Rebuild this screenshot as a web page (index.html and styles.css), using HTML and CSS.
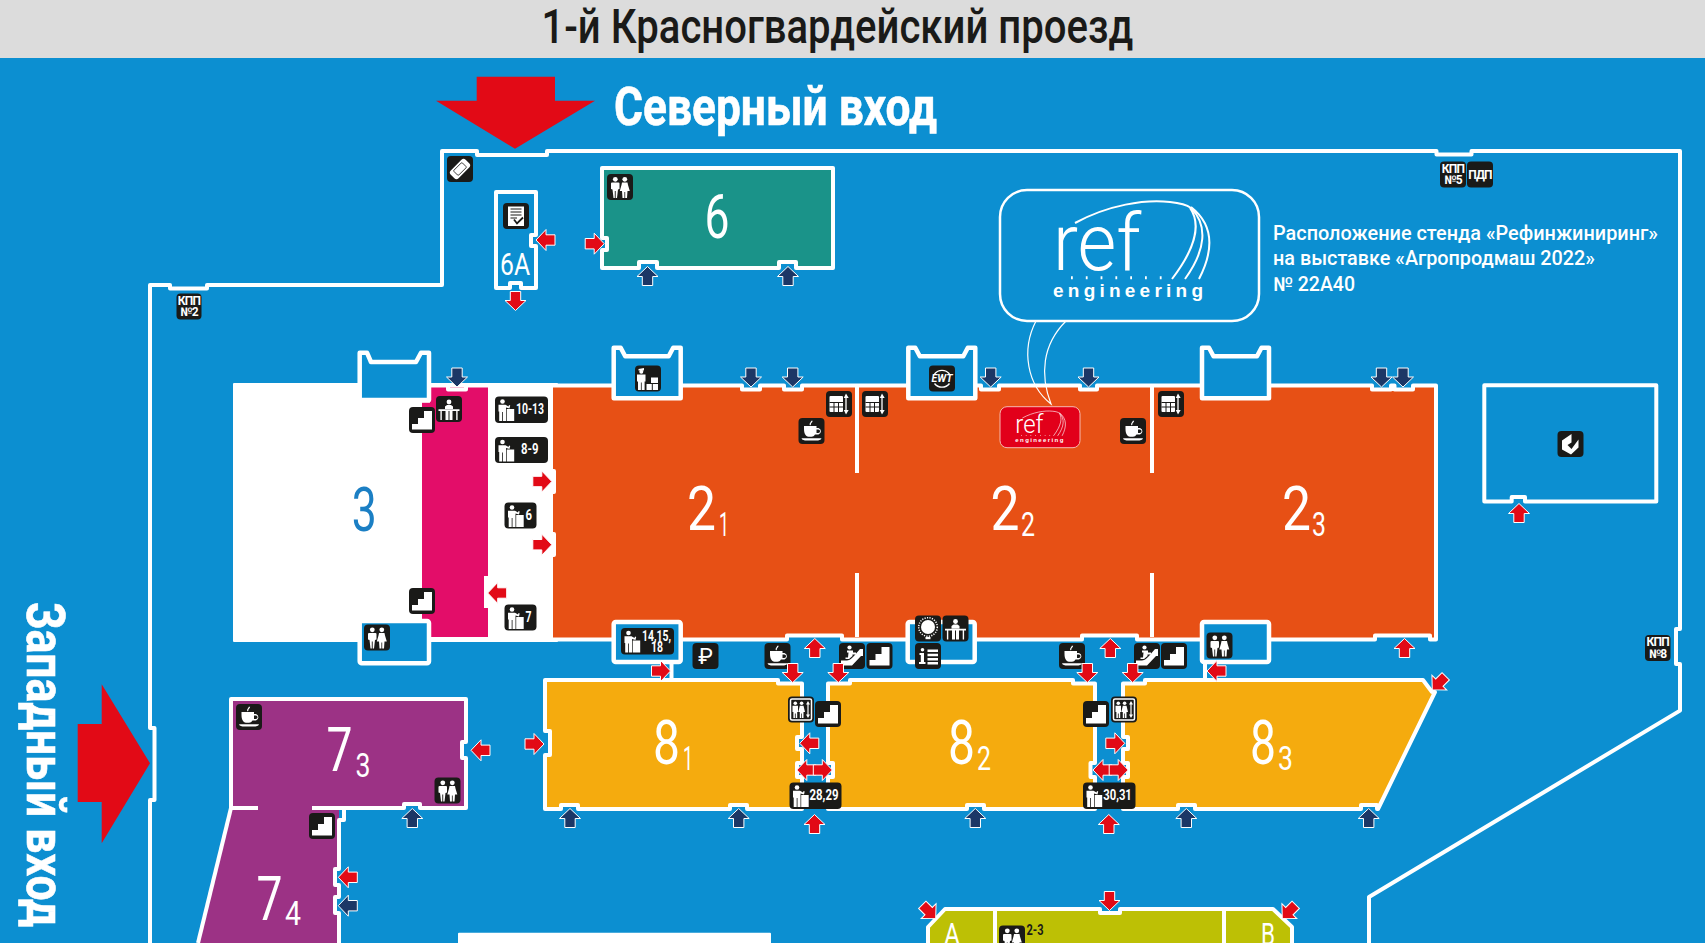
FILE: index.html
```html
<!DOCTYPE html>
<html lang="ru">
<head>
    <meta charset="UTF-8">
    <title>Схема павильонов</title>
    <link rel="stylesheet" href="styles.css">
</head>
<body>
    <header class="street"><span class="street-name">1-й Красногвардейский проезд</span></header>

    <svg class="map" viewBox="0 58 1705 885" width="1705" height="885" xmlns="http://www.w3.org/2000/svg">
        <defs>
            <polygon id="a-red" class="arrow-red" points="0,-9.5 10.5,0.5 5.2,0.5 5.2,9.5 -5.2,9.5 -5.2,0.5 -10.5,0.5"/>
            <polygon id="a-navy" class="arrow-navy" points="0,-9.5 10.5,0.5 5.2,0.5 5.2,9.5 -5.2,9.5 -5.2,0.5 -10.5,0.5"/>
            <path id="ears" class="cut" d="M0 38V0H7L11.5 8.5H55L59.5 0H67V50.5H0Z"/>

            <!-- иконки 26x26 -->
            <g id="i-stair"><rect class="bd" width="26" height="26" rx="4"/><path class="wh" d="M3 22.5V17H9V11H15V4H23V22.5Z"/></g>
            <g id="i-wc"><rect class="bd" width="26" height="26" rx="4"/><circle class="wh" cx="8.3" cy="5.3" r="2.4"/><path class="wh" d="M4 9.5Q4 8.5 5 8.5H11.5Q12.5 8.5 12.5 9.5V15L11 15.5 10 24H8.7V17H7.8V24H6.5L5.5 15.5 4 15Z"/><circle class="wh" cx="17.8" cy="5.3" r="2.4"/><path class="wh" d="M15 8.5H20.5L21 11 22.8 17H20.5L20 24H18.2V18H17.4V24H15.5L15 17H12.8L14.5 11Z"/></g>
            <g id="i-coffee"><rect class="bd" width="26" height="26" rx="4"/><path class="wh" d="M5.5 8H18V10H20A3.4 3.4 0 0 1 20 16.5H16.5C15.5 18 14.5 18.7 13 18.7H10C7 18.7 5.5 15 5.5 11ZM18 11.5V15H19.8A1.7 1.7 0 0 0 19.8 11.5Z"/><path class="ln" d="M12 7C10.5 5.5 13.5 4.5 13.5 2.8"/><path class="wh" d="M3 20.2H23C22.5 22 20 22.6 18 22.6H8C6 22.6 3.5 22 3 20.2Z"/></g>
            <g id="i-grid"><rect class="bd" width="26" height="26" rx="4"/><rect class="wh" x="3.5" y="5" width="13.5" height="16" rx="1"/><path class="ln-bd" d="M3.5 11.5H17M3.5 16H17M8 11.5V21M12.5 11.5V21"/><path class="ln" d="M20 6V20"/><path class="wh" d="M20 2.5L22.7 7H17.8ZM20 23.5L17.8 19H22.7Z"/></g>
            <g id="i-lift"><rect class="bd" width="26" height="26" rx="4"/><rect class="frame" x="2.5" y="2.5" width="21" height="21" rx="1.5"/><circle class="wh" cx="7.3" cy="6.8" r="1.8"/><path class="wh" d="M4.5 9.3H10V15.5H9.2V21.5H7.7V17H6.9V21.5H5.4V15.5H4.5Z"/><circle class="wh" cx="13.6" cy="6.8" r="1.8"/><path class="wh" d="M11.8 9.3H15.5L17 15.5H15.5V21.5H14V17H13.3V21.5H11.8V15.5H10.3Z"/><path class="wh" d="M20 4.5L22 8H20.6V18H22L20 21.5 18 18H19.4V8H18Z"/></g>
            <g id="i-desk"><rect class="bd" width="26" height="26" rx="4"/><circle class="wh" cx="13" cy="6" r="2.4"/><path class="wh" d="M9 13V10.5L11 9H15L17 10.5V13ZM2.5 13.2H23.5V15H2.5ZM4.4 15H5.8V24H4.4ZM20.2 15H21.6V24H20.2ZM9.5 15H12.5V24H9.5ZM13.5 15H16.5V24H13.5Z"/></g>
            <g id="i-guard"><rect class="bd" width="26" height="26" rx="4"/><path class="wh" d="M3.5 3.5L9 2.5V5H3.5Z"/><circle class="wh" cx="6.3" cy="6.3" r="2"/><path class="wh" d="M2 9H10.5V16H9.6V24.5H6.7V17H5.9V24.5H3V16H2Z"/><path class="wh" d="M16 12H23V17.5H16ZM11.5 18.5H16.8V24.5H11.5ZM17.8 18.5H23V24.5H17.8Z"/></g>
            <g id="i-ewt"><rect class="bd" width="26" height="26" rx="4"/><path class="ln" d="M5.5 8.5A9.5 9.5 0 0 1 20.5 8.5M20.5 18A9.5 9.5 0 0 1 5.5 18"/><text class="t-ewt" x="2.5" y="16.7" textLength="21" lengthAdjust="spacingAndGlyphs">EWT</text></g>
            <g id="i-rub"><rect class="bd" width="26" height="26" rx="4"/><text class="t-rub" x="13" y="21">₽</text></g>
            <g id="i-esc"><rect class="bd" width="26" height="26" rx="4"/><circle class="wh" cx="10.5" cy="4.5" r="2.1"/><path class="wh" d="M8 7.5H14V9.5H17V11.5H13.5V13L10 16H6.5V14.5H9L9.5 9.5H8Z"/><path class="wh" d="M2 17.5H8C11 17.5 13 15 15 13L21 6H24V13H22L13 22.5H2Z"/></g>
            <g id="i-sun"><rect class="bd" width="26" height="26" rx="4"/><circle class="wh" cx="13" cy="11.5" r="7"/><circle class="dash" cx="13" cy="11.5" r="9.3"/><rect class="wh" x="10.5" y="21.5" width="5" height="2.2"/></g>
            <g id="i-info"><rect class="bd" width="26" height="26" rx="4"/><circle class="wh" cx="7.5" cy="6.7" r="1.8"/><path class="wh" d="M4.5 10H9V19H10.5V21H4V19H5.8V12H4.5ZM12.5 6.5H23V9H12.5ZM12.5 10.7H23V13.2H12.5ZM12.5 15H23V17.5H12.5ZM12.5 19H23V21.5H12.5Z"/></g>
            <g id="i-band"><rect class="bd" width="26" height="26" rx="4"/><g transform="rotate(-45 13 13)"><rect class="wh" x="2.5" y="7.5" width="21" height="11" rx="3"/><rect class="frame-bd" x="7" y="9.6" width="12" height="6.8" rx="1"/></g></g>
            <g id="i-doc"><rect class="bd" width="26" height="26" rx="4"/><path class="wh" d="M5 3.5H21V23H5Z"/><path class="ln-bd" d="M7.5 6H18.5M7.5 9H18.5M7.5 12H18.5M7.5 15H14"/><path class="ln-check" d="M11 16.5L14 20.5 20 14.5"/></g>
            <g id="i-leaf"><rect class="bd" width="26" height="26" rx="4"/><path class="wh" d="M14 3V11.5L10 14 14 18 21 8.5V16.5L13.5 23.5 4.5 18.5V9.5Z"/></g>
            <g id="i-clerk"><circle class="wh" cx="7.5" cy="5" r="2.3"/><path class="wh" d="M3.5 8.2H10.5L13.5 10 14 8.5 15.2 9 14.5 12 11 11V24.5H8V15.5H7.2V24.5H4.2V15H3.5Z"/><rect class="wh" x="11.7" y="12.5" width="7.5" height="12"/></g>

            <!-- логотип -->
            <g id="ref-logo">
                <text class="logo-ref" x="1053" y="270" textLength="88" lengthAdjust="spacingAndGlyphs">ref</text>
                <path class="logo-line" d="M1075 223C1108 205 1145 199 1170 202C1180 203 1187 205 1191 208"/>
                <path class="logo-line" d="M1190 208C1200 222 1198 245 1172 279"/>
                <path class="logo-line" d="M1191 208C1208 225 1206 250 1185 279"/>
                <path class="logo-line" d="M1191 207C1214 225 1214 250 1199 279"/>
                <path class="logo-dots" d="M1071 277.7H1162"/>
                <text class="logo-eng" x="1053" y="297" textLength="150">engineering</text>
            </g>
        </defs>

        <rect class="water" x="0" y="58" width="1705" height="885"/>

        <!-- внешний забор -->
        <path class="wall" d="M150 943V800H154.5V728H150V285H170V288.5H207V285H442V151H477V155H547V151H1436.5V154.6H1471.5V151H1680V629H1676V664H1680V710.6L1369 897V943"/>

        <!-- павильон 6 и 6А -->
        <path class="hall h6" d="M602 168H833V268H796V262H779V268H657V262H639V268H602V250H607V238H602Z"/>
        <path class="wall" d="M496 192H536V235H531V246H536V288H521V283H510V288H496Z"/>

        <!-- павильоны 3 и 2 -->
        <rect class="white-hall" x="233" y="383" width="325" height="259" rx="1"/>
        <path class="pink" d="M430 387.5H488V576H484V608H488V637H430V621H422V402.7H430Z"/>
        <path class="door" d="M448 385.5V389.5H466V385.5"/>
        <path class="hall h2" d="M551 385.5H742V389.5H760V385.5H784V389.5H802V385.5H981V389.5H999V385.5H1080V389.5H1097V385.5H1372V389.5H1391V385.5H1394.5V389.5H1413V385.5H1436V639.5H1430V635.5H1375V639.5H1137V635.5H1082V639.5H842V635.5H787V639.5H551V555H554V534H551V492H554V471H551Z"/>
        <path class="wall" d="M857 386V473M857 573V637M1152 386V473M1152 573V637"/>

        <use href="#ears" x="613.7" y="347.7"/>
        <use href="#ears" x="908.3" y="347.7"/>
        <use href="#ears" x="1202" y="347.7"/>
        <path class="cut" d="M359.7 385V352.7H367L371 362H416L421 352.7H429V400H359.7Z"/>
        <rect class="cut" x="359.7" y="621" width="69.3" height="42.3" rx="2"/>
        <rect class="cut" x="613.7" y="622" width="67" height="40" rx="2"/>
        <rect class="cut" x="907.7" y="622" width="67" height="40" rx="2"/>
        <rect class="cut" x="1202" y="622" width="67" height="40" rx="2"/>
        <path class="wall" d="M671.5 662V680M1205 662V680"/>

        <!-- правый павильон -->
        <path class="wall" d="M1484.3 385.3H1656.3V501.6H1525V497H1511.7V501.6H1484.3Z"/>

        <!-- павильоны 7 -->
        <path class="h7" d="M231 699H466V742H462V758H466V808H420V804H404V808H339V869H335V885H339V897H335V913H339V943H198L231 808Z"/>
        <path class="wall" d="M258 808H231V699H466V742H462V758H466V808H420V804H404V808H312"/>
        <path class="wall" d="M231 808L198 943"/>
        <path class="wall" d="M330 808H344V820H339V869H335V885H339V897H335V913H339V943"/>

        <!-- павильоны 8 -->
        <path class="hall h8" d="M545 680H778V683.5H802V737H797V749H802V763H797V777H802V809H747V805H730V809H578V805H561V809H545V755H550V731H545Z"/>
        <path class="hall h8" d="M828 683.5H850V680H1073V683.5H1095V763H1090.5V777H1095V809H984V805H967V809H828V777H833V763H828Z"/>
        <path class="hall h8" d="M1123 683.5H1145V680H1423L1432 692H1435L1378 809H1377V805H1361V809H1195V805H1178V809H1123V777H1128V763H1123V749H1128V737H1123Z"/>

        <!-- павильон внизу -->
        <path class="hall h-olive" d="M928 950V927L945 909H1100V913H1120V909H1273L1292 927V950Z"/>
        <path class="wall" d="M995 909V943M1224 909V943"/>
        <rect class="white-block" x="458" y="932.7" width="313" height="20" rx="1"/>

        <!-- большие стрелки входов -->
        <polygon class="entry" points="476.7,76.7 555,76.7 555,100.7 595,100.7 515,148.7 436,100.7 476.7,100.7"/>
        <polygon class="entry" points="77.7,724 101.7,724 101.7,684.3 150,763.3 101.7,843.3 101.7,802 77.7,802"/>

        <!-- номера павильонов -->
        <text class="num" x="704.5" y="238" textLength="25" lengthAdjust="spacingAndGlyphs">6</text>
        <text class="num-small" x="500" y="275" textLength="30" lengthAdjust="spacingAndGlyphs">6А</text>
        <text class="num num-3" x="351.7" y="531" textLength="25" lengthAdjust="spacingAndGlyphs">3</text>
        <text class="num" x="687" y="530" textLength="29" lengthAdjust="spacingAndGlyphs">2</text>
        <text class="sub" x="719" y="536" textLength="10" lengthAdjust="spacingAndGlyphs">1</text>
        <text class="num" x="990.5" y="530" textLength="29" lengthAdjust="spacingAndGlyphs">2</text>
        <text class="sub" x="1021" y="536" textLength="14" lengthAdjust="spacingAndGlyphs">2</text>
        <text class="num" x="1282" y="530" textLength="29" lengthAdjust="spacingAndGlyphs">2</text>
        <text class="sub" x="1312" y="536" textLength="14" lengthAdjust="spacingAndGlyphs">3</text>
        <text class="num" x="326.5" y="771" textLength="26" lengthAdjust="spacingAndGlyphs">7</text>
        <text class="sub" x="355.5" y="776.5" textLength="15" lengthAdjust="spacingAndGlyphs">3</text>
        <text class="num" x="256.5" y="920" textLength="26" lengthAdjust="spacingAndGlyphs">7</text>
        <text class="sub" x="285" y="925" textLength="16" lengthAdjust="spacingAndGlyphs">4</text>
        <text class="num" x="653" y="764" textLength="27" lengthAdjust="spacingAndGlyphs">8</text>
        <text class="sub" x="683" y="770" textLength="10" lengthAdjust="spacingAndGlyphs">1</text>
        <text class="num" x="948" y="764" textLength="27" lengthAdjust="spacingAndGlyphs">8</text>
        <text class="sub" x="977" y="770" textLength="14" lengthAdjust="spacingAndGlyphs">2</text>
        <text class="num" x="1250" y="764" textLength="26" lengthAdjust="spacingAndGlyphs">8</text>
        <text class="sub" x="1278" y="770" textLength="15" lengthAdjust="spacingAndGlyphs">3</text>
        <text class="num-small" x="944" y="945" textLength="16" lengthAdjust="spacingAndGlyphs">А</text>
        <text class="num-small" x="1261" y="945" textLength="14" lengthAdjust="spacingAndGlyphs">В</text>

        <!-- подписи -->
        <text class="sign" x="614" y="125" textLength="323" lengthAdjust="spacingAndGlyphs">Северный вход</text>
        <text class="sign" transform="translate(27 602) rotate(90)" textLength="325" lengthAdjust="spacingAndGlyphs">Западный вход</text>
        <text class="note" x="1273" y="240" textLength="385" lengthAdjust="spacingAndGlyphs">Расположение стенда «Рефинжиниринг»</text>
        <text class="note" x="1273" y="265" textLength="322" lengthAdjust="spacingAndGlyphs">на выставке «Агропродмаш 2022»</text>
        <text class="note" x="1273" y="290.5" textLength="82" lengthAdjust="spacingAndGlyphs">№ 22А40</text>

        <!-- стенд -->
        <rect class="bubble" x="1000" y="190" width="259" height="131" rx="27"/>
        <path class="bubble-tail" d="M1036 321C1021 350 1027 385 1051 404C1040 375 1042 345 1066 321"/>
        <use href="#ref-logo"/>
        <rect class="stand" x="1000" y="406.7" width="80" height="41" rx="7"/>
        <use href="#ref-logo" transform="translate(678.4 346.6) scale(.32)"/>

        <!-- значки -->
        <use href="#i-band" x="447" y="156"/>
        <use href="#i-doc" x="503" y="203"/>
        <use href="#i-wc" x="607" y="174"/>
        <use href="#i-guard" x="635" y="365.5"/>
        <use href="#i-grid" x="826" y="391"/>
        <use href="#i-coffee" x="798.5" y="418"/>
        <use href="#i-grid" x="862" y="391"/>
        <use href="#i-ewt" x="929" y="365.5"/>
        <use href="#i-coffee" x="1120" y="418"/>
        <use href="#i-grid" x="1158" y="391"/>
        <use href="#i-leaf" x="1557.5" y="431"/>
        <use href="#i-stair" x="409" y="407"/>
        <use href="#i-desk" x="436" y="396"/>
        <use href="#i-stair" x="409" y="588"/>
        <use href="#i-wc" x="364" y="624.5"/>
        <use href="#i-rub" x="692.5" y="643"/>
        <use href="#i-coffee" x="764.5" y="643"/>
        <use href="#i-esc" x="839" y="643"/>
        <use href="#i-stair" x="866.5" y="643"/>
        <use href="#i-sun" x="915" y="615.5"/>
        <use href="#i-desk" x="942.5" y="615.5"/>
        <use href="#i-info" x="915" y="643"/>
        <use href="#i-lift" x="788" y="696.5"/>
        <use href="#i-stair" x="815" y="701"/>
        <use href="#i-coffee" x="1059" y="643"/>
        <use href="#i-esc" x="1134" y="643"/>
        <use href="#i-stair" x="1161" y="643"/>
        <use href="#i-wc" x="1206.5" y="632.5"/>
        <use href="#i-stair" x="1083" y="701"/>
        <use href="#i-lift" x="1111" y="696.5"/>
        <use href="#i-coffee" x="236" y="704"/>
        <use href="#i-wc" x="434.5" y="777.5"/>
        <use href="#i-stair" x="309" y="813"/>
        <use href="#i-wc" x="999" y="925.5"/>
        <text class="t-plain" x="1026.5" y="935" textLength="17" lengthAdjust="spacingAndGlyphs">2-3</text>

        <g transform="translate(495 396.5)"><rect class="bd" width="53" height="26.5" rx="4"/><use href="#i-clerk"/><text class="t-badge" x="21" y="17.7" textLength="28" lengthAdjust="spacingAndGlyphs">10-13</text></g>
        <g transform="translate(495 437)"><rect class="bd" width="53" height="26" rx="4"/><use href="#i-clerk"/><text class="t-badge" x="26" y="17.3" textLength="17.5" lengthAdjust="spacingAndGlyphs">8-9</text></g>
        <g transform="translate(504.5 502.5)"><rect class="bd" width="32" height="26" rx="4"/><use href="#i-clerk"/><text class="t-badge" x="21" y="17.7" textLength="6.5" lengthAdjust="spacingAndGlyphs">6</text></g>
        <g transform="translate(504.5 604.5)"><rect class="bd" width="32" height="26" rx="4"/><use href="#i-clerk"/><text class="t-badge" x="21" y="17.7" textLength="6" lengthAdjust="spacingAndGlyphs">7</text></g>
        <g transform="translate(621 628)"><rect class="bd" width="53" height="26.5" rx="4"/><use href="#i-clerk"/><text class="t-badge" x="21" y="12.7" textLength="29" lengthAdjust="spacingAndGlyphs">14,15,</text><text class="t-badge" x="30" y="24.2" textLength="12" lengthAdjust="spacingAndGlyphs">18</text></g>
        <g transform="translate(789.5 782.5)"><rect class="bd" width="52" height="26.5" rx="4"/><use href="#i-clerk"/><text class="t-badge" x="20" y="17.2" textLength="29" lengthAdjust="spacingAndGlyphs">28,29</text></g>
        <g transform="translate(1083 782.5)"><rect class="bd" width="52.5" height="26.5" rx="4"/><use href="#i-clerk"/><text class="t-badge" x="20.3" y="17.2" textLength="28.5" lengthAdjust="spacingAndGlyphs">30,31</text></g>

        <g transform="translate(176.5 293.5)"><rect class="bd" width="25" height="26" rx="4"/><text class="t-kpp" x="12.5" y="11.3">КПП</text><text class="t-kpp" x="12.5" y="22.7">№2</text></g>
        <g transform="translate(1440 161.5)"><rect class="bd" width="26" height="26" rx="4"/><text class="t-kpp" x="13" y="11.3">КПП</text><text class="t-kpp" x="13" y="22.7">№5</text></g>
        <g transform="translate(1467 161.5)"><rect class="bd" width="26" height="26" rx="4"/><text class="t-kpp" x="13" y="17">ПДП</text></g>
        <g transform="translate(1645 635)"><rect class="bd" width="25.5" height="26" rx="4"/><text class="t-kpp" x="12.7" y="11.3">КПП</text><text class="t-kpp" x="12.7" y="22.7">№8</text></g>

        <!-- малые стрелки -->
        <use href="#a-red" transform="translate(545.5 240) rotate(-90)"/>
        <use href="#a-red" transform="translate(594.7 243.7) rotate(90)"/>
        <use href="#a-red" transform="translate(515.5 301) rotate(180)"/>
        <use href="#a-navy" transform="translate(647.5 276)"/>
        <use href="#a-navy" transform="translate(788 276)"/>
        <use href="#a-navy" transform="translate(457 377.5) rotate(180)"/>
        <use href="#a-navy" transform="translate(751 377.5) rotate(180)"/>
        <use href="#a-navy" transform="translate(792.7 377.5) rotate(180)"/>
        <use href="#a-navy" transform="translate(990.7 377.5) rotate(180)"/>
        <use href="#a-navy" transform="translate(1088.5 377.5) rotate(180)"/>
        <use href="#a-navy" transform="translate(1381.5 377.5) rotate(180)"/>
        <use href="#a-navy" transform="translate(1403 377.5) rotate(180)"/>
        <use href="#a-red" transform="translate(542.3 481.5) rotate(90)"/>
        <use href="#a-red" transform="translate(542.3 544.7) rotate(90)"/>
        <use href="#a-red" transform="translate(497.2 593) rotate(-90)"/>
        <use href="#a-red" transform="translate(1519 513)"/>
        <use href="#a-red" transform="translate(661 671) rotate(90)"/>
        <use href="#a-red" transform="translate(814.8 648)"/>
        <use href="#a-red" transform="translate(792.7 673) rotate(180)"/>
        <use href="#a-red" transform="translate(838.3 673) rotate(180)"/>
        <use href="#a-red" transform="translate(809.3 743.3) rotate(-90)"/>
        <use href="#a-red" transform="translate(806.3 770) rotate(-90)"/>
        <use href="#a-red" transform="translate(822.8 770) rotate(90)"/>
        <use href="#a-red" transform="translate(534.5 744) rotate(90)"/>
        <use href="#a-navy" transform="translate(570 818)"/>
        <use href="#a-navy" transform="translate(738.7 818)"/>
        <use href="#a-red" transform="translate(814.5 824)"/>
        <use href="#a-navy" transform="translate(975.3 818)"/>
        <use href="#a-red" transform="translate(1110.3 648)"/>
        <use href="#a-red" transform="translate(1087.3 673) rotate(180)"/>
        <use href="#a-red" transform="translate(1132.7 673) rotate(180)"/>
        <use href="#a-red" transform="translate(1216.5 671) rotate(-90)"/>
        <use href="#a-red" transform="translate(1404.5 648)"/>
        <use href="#a-red" transform="translate(1439 683) rotate(-135)"/>
        <use href="#a-red" transform="translate(1115.3 743.3) rotate(90)"/>
        <use href="#a-red" transform="translate(1102.5 770) rotate(-90)"/>
        <use href="#a-red" transform="translate(1118.7 770) rotate(90)"/>
        <use href="#a-red" transform="translate(1108.8 824)"/>
        <use href="#a-navy" transform="translate(1186.3 818)"/>
        <use href="#a-navy" transform="translate(1368.7 818)"/>
        <use href="#a-red" transform="translate(1109.5 901) rotate(180)"/>
        <use href="#a-red" transform="translate(1289 911.5) rotate(-135)"/>
        <use href="#a-red" transform="translate(929 911.5) rotate(135)"/>
        <use href="#a-red" transform="translate(480.5 750.3) rotate(-90)"/>
        <use href="#a-navy" transform="translate(412.3 818)"/>
        <use href="#a-red" transform="translate(347.8 877.3) rotate(-90)"/>
        <use href="#a-navy" transform="translate(347.8 905.7) rotate(-90)"/>
    </svg>
</body>
</html>
```

FILE: styles.css
```css
html, body {
    margin: 0;
    padding: 0;
    overflow: hidden;
    background-color: #0c8fd1;
}
.street {
    box-sizing: border-box;
    height: 58px;
    background-color: #dcdcdc;
    display: flex;
    justify-content: center;
    align-items: center;
    padding: 0 30px 6px 0;
}
.street-name {
    display: inline-block;
    font-family: Roboto, sans-serif;
    font-size: 48px;
    font-weight: 500;
    color: #1a1a18;
    transform: scaleX(.835);
    white-space: nowrap;
}
.map {
    display: block;
}
.water {
    fill: #0c8fd1;
}
.wall, .door {
    fill: none;
    stroke: #fff;
    stroke-width: 4;
    stroke-linejoin: round;
}
.hall, .cut {
    stroke: #fff;
    stroke-width: 4;
    stroke-linejoin: round;
}
.cut {
    fill: #0c8fd1;
    stroke-width: 4.5;
}
.h6 { fill: #1a9389; }
.h2 { fill: #e75015; }
.h7 { fill: #9c3285; }
.h8 { fill: #f5ab0e; }
.h-olive { fill: #bdc005; }
.pink { fill: #e30d69; }
.white-hall, .white-block { fill: #fff; }
.entry { fill: #e20a16; }
.arrow-red, .arrow-navy {
    stroke: #fff;
    stroke-width: 1;
}
.arrow-red { fill: #e20a16; }
.arrow-navy { fill: #1c3766; }

/* текст */
.num, .sub, .num-small {
    font-family: Roboto, sans-serif;
    font-weight: 400;
    fill: #fff;
}
.num { font-size: 61px; }
.num-3 { fill: #1b7fc4; }
.sub { font-size: 33px; }
.num-small { font-size: 31px; }
.sign {
    font-family: Roboto, sans-serif;
    font-size: 53px;
    font-weight: 700;
    fill: #fff;
    stroke: #fff;
    stroke-width: .6;
}
.note {
    font-family: Roboto, sans-serif;
    font-size: 19.5px;
    font-weight: 500;
    fill: #fff;
}

/* значки */
.bd { fill: #1a1a18; }
.wh { fill: #fff; }
.ln {
    fill: none;
    stroke: #fff;
    stroke-width: 1.3;
}
.ln-bd {
    fill: none;
    stroke: #1a1a18;
    stroke-width: 1;
}
.ln-check {
    fill: none;
    stroke: #1a1a18;
    stroke-width: 1.8;
}
.frame {
    fill: none;
    stroke: #fff;
    stroke-width: 1.5;
}
.frame-bd {
    fill: none;
    stroke: #1a1a18;
    stroke-width: .8;
}
.dash {
    fill: none;
    stroke: #fff;
    stroke-width: 1.5;
    stroke-dasharray: 1.2 1.3;
}
.t-badge, .t-kpp {
    font-family: Roboto, sans-serif;
    font-weight: 700;
    fill: #fff;
}
.t-badge { font-size: 14px; }
.t-kpp {
    font-size: 12px;
    text-anchor: middle;
    letter-spacing: -.8px;
}
.t-plain {
    font-family: Roboto, sans-serif;
    font-size: 14px;
    font-weight: 700;
    fill: #1a1a18;
}
.t-ewt {
    font-family: Roboto, sans-serif;
    font-size: 10px;
    font-weight: 700;
    font-style: italic;
    fill: #fff;
}
.t-rub {
    font-family: Roboto, "DejaVu Sans", sans-serif;
    font-size: 22px;
    font-weight: 400;
    fill: #fff;
    text-anchor: middle;
}

/* стенд */
.bubble {
    fill: none;
    stroke: #fff;
    stroke-width: 2.5;
}
.bubble-tail {
    fill: none;
    stroke: #fff;
    stroke-width: 1.2;
}
.stand {
    fill: #e2001a;
    stroke: #f7b8b0;
    stroke-width: 1;
}
.logo-ref {
    font-family: Roboto, sans-serif;
    font-size: 80px;
    font-weight: 300;
    fill: #fff;
}
.logo-eng {
    font-family: "Liberation Sans", sans-serif;
    font-size: 19px;
    font-weight: 700;
    fill: #fff;
}
.logo-line {
    fill: none;
    stroke: #fff;
    stroke-width: 2;
}
.logo-dots {
    fill: none;
    stroke: #fff;
    stroke-width: 3;
    stroke-dasharray: 1.8 13;
}
```
